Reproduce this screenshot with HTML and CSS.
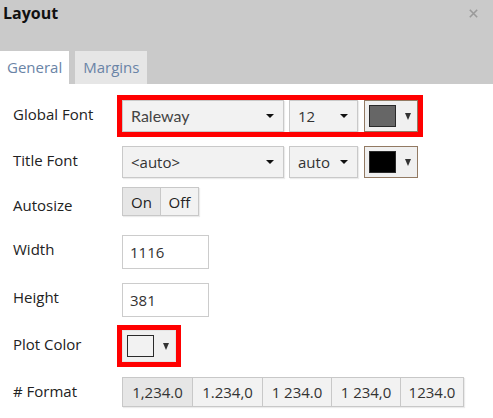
FILE: index.html
```html
<!DOCTYPE html>
<html>
<head>
<meta charset="utf-8">
<link rel="stylesheet" href="styles.css">
</head>
<body>
<div class="dialog">
  <div class="header">
    <div class="title-bar">
      <span class="title">Layout</span>
      <svg class="close" width="9" height="9" viewBox="0 0 9 9"><path d="M0.8 0.8 L8.2 8.2 M8.2 0.8 L0.8 8.2" stroke="#9a9a9a" stroke-width="1.6" fill="none"/></svg>
    </div>
    <div class="tabs">
      <div class="tab tab-active">General</div>
      <div class="tab tab-general">Margins</div>
    </div>
  </div>
  <div class="form">
    <div class="label">Global Font</div>
    <div class="cell">
      <div class="group highlight">
        <div class="select select-font"><span class="select-text raleway">Raleway</span><span class="caret"></span></div>
        <div class="select select-size"><span class="select-text">12</span><span class="caret"></span></div>
        <div class="colorbtn"><span class="swatch swatch-grey"></span><span class="arrow"></span></div>
      </div>
    </div>

    <div class="label">Title Font</div>
    <div class="cell">
      <div class="group">
        <div class="select select-font"><span class="select-text">&lt;auto&gt;</span><span class="caret"></span></div>
        <div class="select select-size"><span class="select-text">auto</span><span class="caret"></span></div>
        <div class="colorbtn"><span class="swatch swatch-black"></span><span class="arrow"></span></div>
      </div>
    </div>

    <div class="label label-auto">Autosize</div>
    <div class="cell">
      <div class="btngroup toggle">
        <div class="btn btn-active">On</div>
        <div class="btn">Off</div>
      </div>
    </div>

    <div class="label">Width</div>
    <div class="cell"><div class="input">1116</div></div>

    <div class="label">Height</div>
    <div class="cell"><div class="input">381</div></div>

    <div class="label">Plot Color</div>
    <div class="cell">
      <div class="group highlight">
        <div class="colorbtn plotbtn"><span class="swatch swatch-light"></span><span class="arrow"></span></div>
      </div>
    </div>

    <div class="label label-format"># Format</div>
    <div class="cell">
      <div class="btngroup format">
        <div class="btn btn-active fmt-a">1,234.0</div>
        <div class="btn fmt-a">1.234,0</div>
        <div class="btn fmt-b">1 234.0</div>
        <div class="btn fmt-b">1 234,0</div>
        <div class="btn fmt-c">1234.0</div>
      </div>
    </div>
  </div>
</div>
</body>
</html>
```
FILE: styles.css
```css
* { box-sizing: border-box; }
html, body { margin: 0; padding: 0; background: #fff; }
body {
  font-family: "Open Sans", "DejaVu Sans", sans-serif;
  font-size: 15px;
  color: #222;
  width: 493px;
  height: 418px;
  overflow: hidden;
}
.header { background: #cacaca; }
.title-bar {
  height: 51px;
  display: flex;
  justify-content: space-between;
  align-items: flex-start;
  padding: 2px 15px 0 3px;
}
.title {
  font-weight: 700;
  font-size: 16px;
  line-height: 22px;
  color: #111;
}
.close { margin-top: 7px; }
.tabs { display: flex; gap: 6px; height: 33px; }
.tab {
  height: 33px;
  line-height: 33px;
  padding: 0 8px;
  background: #e6e6e6;
  color: #6a84a6;
}
.tab-active { background: #fff; padding: 0 7px; color: #6a84a6; }

.form {
  display: grid;
  grid-template-columns: 109px 1fr;
  grid-template-rows: 46px 41px 48px 48px 47px 47px auto;
  padding: 16px 0 0 13px;
}
.label {
  line-height: 20px;
  padding-top: 4px;
  color: #222;
}
.label-auto { padding-top: 8px; }
.label-format { padding-top: 4px; }
.cell { display: flex; align-items: flex-start; }

.group { display: flex; gap: 5px; }
.highlight { outline: 5px solid #ff0000; outline-offset: 0; }

.select {
  height: 32px;
  background: #f2f2f2;
  border: 1px solid #c9c9c9;
  box-shadow: 1px 1px 1px rgba(0,0,0,0.08);
  display: flex;
  align-items: center;
  justify-content: space-between;
  padding: 0 9px 0 8px;
  color: #333;
}
.select-font { width: 162px; }
.select-size { width: 69px; margin-right: 1px; }
.select-text { line-height: 20px; }
.raleway { font-family: "Lato", "Open Sans", sans-serif; font-size: 16px; color: #444; }
.caret {
  width: 0; height: 0;
  border-left: 4px solid transparent;
  border-right: 4px solid transparent;
  border-top: 4px solid #111;
}
.colorbtn {
  width: 54px;
  height: 32px;
  background: #f0f0f0;
  border: 1px solid #927a63;
  display: flex;
  align-items: center;
  padding-left: 4px;
}
.plotbtn { border-color: #e4e4e4; }
.swatch {
  width: 27px;
  height: 22px;
  border: 1.5px solid #2a2a2a;
}
.swatch-grey { background: #666; }
.swatch-black { background: #000; }
.swatch-light { background: #f2f2f2; }
.arrow {
  margin-left: 9px;
  width: 0; height: 0;
  border-left: 3px solid transparent;
  border-right: 3px solid transparent;
  border-top: 7px solid #333;
}

.btngroup {
  display: flex;
  border: 1px solid #c8c8c8;
  box-shadow: 1px 1px 1px rgba(0,0,0,0.08);
  background: #f2f2f2;
}
.btn {
  display: flex;
  align-items: center;
  justify-content: center;
  color: #222;
}
.btn + .btn { border-left: 1px solid #c8c8c8; }
.btn-active { background: #e6e6e6; }
.toggle { height: 29px; }
.toggle .btn { width: 38px; }
.toggle .btn:first-child { width: 37px; }
.format { height: 30px; }
.format .btn { color: #333; }
.fmt-a { width: 70px; }
.format .fmt-a:first-child { width: 69px; }
.fmt-b { width: 69px; }
.fmt-c { width: 63px; }

.input {
  width: 87px;
  height: 34px;
  border: 1px solid #ccc;
  background: #fff;
  padding-left: 7px;
  line-height: 32px;
  color: #333;
}
```
